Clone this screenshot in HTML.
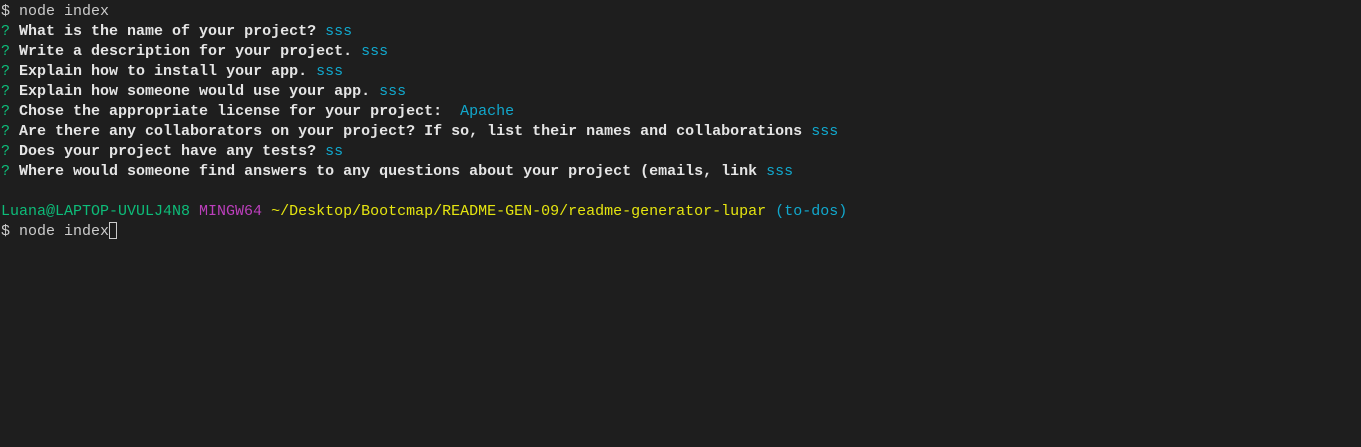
<!DOCTYPE html>
<html><head><style>
html,body{margin:0;padding:0;background:#1e1e1e;width:1361px;height:447px;overflow:hidden}
pre{margin:0;position:absolute;top:-18px;left:1px;font-family:"Liberation Mono",monospace;font-size:15px;line-height:20px;color:#cccccc;letter-spacing:0}
.g{color:#0dbc79}.m{color:#bc3fbc}.y{color:#e5e510}.c{color:#11a8cd}b{font-weight:bold;color:#e5e5e5}
.cur{display:inline-block;width:8px;height:17px;border:1px solid #ccc;vertical-align:-4px;box-sizing:border-box}
</style></head><body>
<pre><span class="g">Luana@LAPTOP-UVULJ4N8</span> <span class="m">MINGW64</span> <span class="y">~/Desktop/Bootcmap/README-GEN-09/readme-generator-lupar</span> <span class="c">(to-dos)</span>
$ node index
<span class="g">?</span> <b>What is the name of your project?</b> <span class="c">sss</span>
<span class="g">?</span> <b>Write a description for your project.</b> <span class="c">sss</span>
<span class="g">?</span> <b>Explain how to install your app.</b> <span class="c">sss</span>
<span class="g">?</span> <b>Explain how someone would use your app.</b> <span class="c">sss</span>
<span class="g">?</span> <b>Chose the appropriate license for your project:</b>  <span class="c">Apache</span>
<span class="g">?</span> <b>Are there any collaborators on your project? If so, list their names and collaborations</b> <span class="c">sss</span>
<span class="g">?</span> <b>Does your project have any tests?</b> <span class="c">ss</span>
<span class="g">?</span> <b>Where would someone find answers to any questions about your project (emails, link</b> <span class="c">sss</span>

<span class="g">Luana@LAPTOP-UVULJ4N8</span> <span class="m">MINGW64</span> <span class="y">~/Desktop/Bootcmap/README-GEN-09/readme-generator-lupar</span> <span class="c">(to-dos)</span>
$ node index<span class="cur"></span></pre>
</body></html>
